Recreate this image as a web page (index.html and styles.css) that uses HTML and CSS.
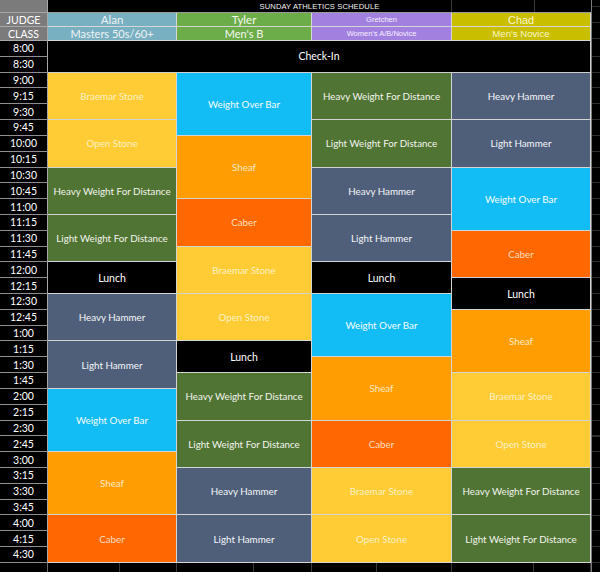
FILE: index.html
```html
<!DOCTYPE html>
<html>
<head>
<meta charset="utf-8">
<link rel="stylesheet" href="styles.css">
</head>
<body>
<div class="sheet">
  <div class="title">SUNDAY ATHLETICS SCHEDULE</div>
  <div class="checkin">Check-In</div>
  <div class="filler"></div>

  <!-- time column -->
  <div class="lbl lbl-top"></div>
  <div class="lbl">JUDGE</div>
  <div class="lbl">CLASS</div>
  <div class="t">8:00</div><div class="t">8:30</div>
  <div class="t">9:00</div><div class="t">9:15</div><div class="t">9:30</div><div class="t">9:45</div>
  <div class="t">10:00</div><div class="t">10:15</div><div class="t">10:30</div><div class="t">10:45</div>
  <div class="t">11:00</div><div class="t">11:15</div><div class="t">11:30</div><div class="t">11:45</div>
  <div class="t">12:00</div><div class="t">12:15</div><div class="t">12:30</div><div class="t">12:45</div>
  <div class="t">1:00</div><div class="t">1:15</div><div class="t">1:30</div><div class="t">1:45</div>
  <div class="t">2:00</div><div class="t">2:15</div><div class="t">2:30</div><div class="t">2:45</div>
  <div class="t">3:00</div><div class="t">3:15</div><div class="t">3:30</div><div class="t">3:45</div>
  <div class="t">4:00</div><div class="t">4:15</div><div class="t">4:30</div>
  <div class="foot foot-time"></div>

  <!-- Alan -->
  <div class="h judge alan">Alan</div>
  <div class="h cls alan">Masters 50s/60+</div>
  <div class="b s3 yellow">Braemar Stone</div>
  <div class="b s3 yellow">Open Stone</div>
  <div class="b s3 green">Heavy Weight For Distance</div>
  <div class="b s3 green">Light Weight For Distance</div>
  <div class="b s2 lunch">Lunch</div>
  <div class="b s3 slate">Heavy Hammer</div>
  <div class="b s3 slate">Light Hammer</div>
  <div class="b s4 cyan">Weight Over Bar</div>
  <div class="b s4 orange">Sheaf</div>
  <div class="b s3 caber">Caber</div>
  <div class="foot foot-alan"></div>

  <!-- Tyler -->
  <div class="h judge tyler">Tyler</div>
  <div class="h cls tyler">Men's B</div>
  <div class="b s4 cyan">Weight Over Bar</div>
  <div class="b s4 orange">Sheaf</div>
  <div class="b s3 caber">Caber</div>
  <div class="b s3 yellow">Braemar Stone</div>
  <div class="b s3 yellow">Open Stone</div>
  <div class="b s2 lunch">Lunch</div>
  <div class="b s3 green">Heavy Weight For Distance</div>
  <div class="b s3 green">Light Weight For Distance</div>
  <div class="b s3 slate">Heavy Hammer</div>
  <div class="b s3 slate">Light Hammer</div>
  <div class="foot foot-tyler"></div>

  <!-- Gretchen -->
  <div class="h judge gretchen small">Gretchen</div>
  <div class="h cls gretchen small">Women's A/B/Novice</div>
  <div class="b s3 green">Heavy Weight For Distance</div>
  <div class="b s3 green">Light Weight For Distance</div>
  <div class="b s3 slate">Heavy Hammer</div>
  <div class="b s3 slate">Light Hammer</div>
  <div class="b s2 lunch">Lunch</div>
  <div class="b s4 cyan">Weight Over Bar</div>
  <div class="b s4 orange">Sheaf</div>
  <div class="b s3 caber">Caber</div>
  <div class="b s3 yellow">Braemar Stone</div>
  <div class="b s3 yellow">Open Stone</div>
  <div class="foot foot-gretchen"></div>

  <!-- Chad -->
  <div class="h judge chad arial big">Chad</div>
  <div class="h cls chad arial mid">Men's Novice</div>
  <div class="b s3 slate">Heavy Hammer</div>
  <div class="b s3 slate">Light Hammer</div>
  <div class="b s4 cyan">Weight Over Bar</div>
  <div class="b s3 caber">Caber</div>
  <div class="b s2 lunch">Lunch</div>
  <div class="b s4 orange">Sheaf</div>
  <div class="b s3 yellow">Braemar Stone</div>
  <div class="b s3 yellow">Open Stone</div>
  <div class="b s3 green">Heavy Weight For Distance</div>
  <div class="b s3 green">Light Weight For Distance</div>
  <div class="foot foot-chad"></div>
</div>
</body>
</html>
```

FILE: styles.css
```css
html, body {
  margin: 0;
  padding: 0;
  background: #000;
}

.sheet {
  width: 600px;
  height: 572px;
  display: grid;
  grid-template-columns: 48px 129px 135px 140px 139px 9px;
  grid-template-rows: 13px 14px 14px repeat(33, 15.82px) 9px;
  grid-auto-flow: column;
  background: #000;
  font-family: Lato, "Open Sans", sans-serif;
  color: #fff;
  overflow: hidden;
}

.sheet > div {
  box-sizing: border-box;
  display: flex;
  align-items: center;
  justify-content: center;
  text-align: center;
  white-space: nowrap;
  overflow: hidden;
}

.title {
  grid-column: 2 / 6;
  grid-row: 1;
  font-family: "Liberation Sans", Arial, sans-serif;
  font-size: 7.6px;
  letter-spacing: 0.1px;
  color: #f2f2f2;
  border-bottom: 1px solid #9a9a9a;
  background:
    linear-gradient(#3a3a3a, #3a3a3a) 403px 0 / 1px 100% no-repeat,
    linear-gradient(#3a3a3a, #3a3a3a) 486px 0 / 1px 100% no-repeat,
    #000;
}

.checkin {
  grid-column: 2 / 6;
  grid-row: 4 / 6;
  font-size: 10.5px;
  border-right: 1px solid #cfcfcf;
  border-bottom: 1px solid #cfcfcf;
}

.filler {
  grid-column: 6;
  grid-row: 1 / -1;
  border-left: 1px solid #7a7a7a;
  background: repeating-linear-gradient(to bottom, transparent 0, transparent 14.8px, #2e2e2e 14.8px, #2e2e2e 15.82px);
  background-position: 0 41px;
}

/* time column */
.lbl {
  background: #7b7b7b;
  color: #fff;
  font-size: 10.5px;
  border-right: 1px solid #a8a8a8;
  border-bottom: 1px solid #a8a8a8;
}

.t {
  font-size: 10.5px;
  color: #fff;
  background: #000;
  border-right: 1px solid #a8a8a8;
  border-bottom: 1px solid #8e8e8e;
}

.foot {
  background: #000;
  border-right: 1px solid #3a3a3a;
}
.foot-time { border-right: 1px solid #6a6a6a; }
.foot-alan {
  background: linear-gradient(#3a3a3a, #3a3a3a) 71px 0 / 1px 100% no-repeat, #000;
}
.foot-tyler {
  background: linear-gradient(#3a3a3a, #3a3a3a) 76px 0 / 1px 100% no-repeat, #000;
}
.foot-gretchen {
  background: linear-gradient(#3a3a3a, #3a3a3a) 64px 0 / 1px 100% no-repeat, #000;
}
.foot-chad {
  background: linear-gradient(#3a3a3a, #3a3a3a) 81px 0 / 1px 100% no-repeat, #000;
}

/* headers */
.h {
  font-size: 11px;
  border-right: 1px solid #d6d6d6;
  border-bottom: 1px solid #d6d6d6;
}
.judge { font-size: 11.5px; }

.alan { background: #78afc1; color: #eef3f6; }
.tyler { background: #6cad49; color: #f4f8ef; }
.gretchen { background: #a280e0; color: #f6f0ff; }
.chad { background: #c9be00; color: #fbf6c8; }

.sheet > .small {
  font-family: "Liberation Sans", Arial, sans-serif;
  font-size: 7.5px;
}
.sheet > .arial { font-family: "Liberation Sans", Arial, sans-serif; }
.sheet > .big { font-size: 10.8px; }
.sheet > .mid { font-size: 9.6px; }

/* blocks */
.b {
  font-size: 9.8px;
  border-right: 1px solid #d4d4d4;
  border-bottom: 1px solid #d4d4d4;
}
.s2 { grid-row: span 2; }
.s3 { grid-row: span 3; }
.s4 { grid-row: span 4; }

.yellow { background: #ffcc35; color: #fdf0c4; }
.green { background: #507433; color: #f2f5ee; }
.slate { background: #4f5f79; color: #f4f6f9; }
.cyan { background: #12bdf5; color: #f4fbff; }
.orange { background: #ff9d02; color: #ffe9c2; }
.caber { background: #ff6800; color: #ffdcbf; }
.lunch { background: #000; color: #fff; font-size: 10.5px; }
```
